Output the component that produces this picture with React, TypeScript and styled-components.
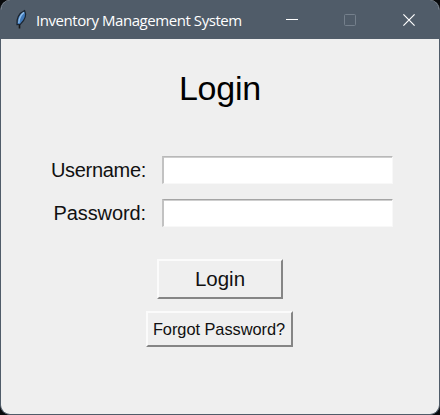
import React from "react";
import styled, { createGlobalStyle } from "styled-components";

const Global = createGlobalStyle`
  * { box-sizing: border-box; }
  html, body { margin: 0; background: #080a0c; overflow: hidden; }
`;

const Window = styled.div`
  width: 440px;
  height: 415px;
  display: flex;
  flex-direction: column;
  background: #efefef;
  border: 1px solid #505c69;
  border-top: 0;
  border-radius: 10px;
  overflow: hidden;
  font-family: "Liberation Sans", Arial, sans-serif;
  color: #111;
`;

const TitleBar = styled.header`
  height: 39px;
  flex: none;
  display: flex;
  align-items: center;
  background: #505c69;
  padding-left: 12px;
`;

const Caption = styled.span`
  flex: 1;
  margin-left: 5px;
  color: #fff;
  font: 15px/20px "Open Sans", sans-serif;
  letter-spacing: -0.44px;
  white-space: nowrap;
`;

const Controls = styled.div`
  display: flex;
  margin-right: 1px;
`;

const Control = styled.button<{ $w: number }>`
  width: ${(p) => p.$w}px;
  height: 39px;
  display: flex;
  align-items: center;
  justify-content: center;
  padding: 0;
  border: 0;
  background: transparent;
`;

const Content = styled.main`
  display: flex;
  flex-direction: column;
  align-items: center;
`;

const Heading = styled.h1`
  margin: 29px 0 0;
  font-size: 34px;
  line-height: 40px;
  font-weight: 400;
  letter-spacing: -0.2px;
  color: #000;
`;

const Form = styled.div`
  display: grid;
  grid-template-columns: 145px 231px;
  column-gap: 16px;
  row-gap: 15px;
  align-self: flex-start;
  margin-top: 48px;
`;

const Label = styled.label<{ $tracking: number }>`
  text-align: right;
  font-size: 20px;
  line-height: 29px;
  height: 28px;
  letter-spacing: ${(p) => p.$tracking}px;
  white-space: nowrap;
`;

const Field = styled.input<{ $edge: string }>`
  width: 231px;
  height: 28px;
  padding: 0 4px;
  background: #fff;
  border: 1px solid #f8f8f8;
  border-top-color: ${(p) => p.$edge};
  border-left: 2px solid #c2c2c2;
  box-shadow: inset 0 1px #cecece;
  outline: 0;
`;

const PushButton = styled.button<{ $w: number; $h: number; $size: number; $gap: number }>`
  width: ${(p) => p.$w}px;
  height: ${(p) => p.$h}px;
  margin-top: ${(p) => p.$gap}px;
  padding: 0;
  background: #efefef;
  border: 2px solid;
  border-color: #fbfbfb #858585 #858585 #fbfbfb;
  font-family: inherit;
  font-size: ${(p) => p.$size}px;
  color: #111;
  white-space: nowrap;
`;

const ForgotButton = styled(PushButton)`
  margin-right: 2px;
  letter-spacing: -0.05px;
`;

const Feather = () => (
  <svg width="18" height="22" viewBox="0 0 18 22">
    <path d="M6.500 19.500V14" stroke="#151515" strokeWidth="1.6" />
    <path d="M4 15.600C3.600 10.800 5.400 4.600 11.600 1.600c2.200 4.400.2 9.600-4.300 13.800z" fill="#3f78b8" stroke="#1b2530" strokeWidth="1.2" />
    <path d="M5.800 14C6 9.500 7.800 5.800 10.900 3.400" stroke="#8fbdea" strokeWidth="1.4" fill="none" />
  </svg>
);

export default function App() {
  return (
    <>
      <Global />
      <Window>
        <TitleBar>
          <Feather />
          <Caption>Inventory Management System</Caption>
          <Controls>
            <Control $w={56} aria-label="Minimize">
              <svg width="12" height="12">
                <path d="M0 5.500H12" stroke="#fff" />
              </svg>
            </Control>
            <Control $w={60} aria-label="Maximize" disabled>
              <svg width="12" height="12">
                <rect x=".5" y=".5" width="11" height="11" rx="1" fill="none" stroke="#75808c" />
              </svg>
            </Control>
            <Control $w={58} aria-label="Close">
              <svg width="12" height="12">
                <path d="M.4.4l11.200 11.200M11.600.4L.4 11.600" stroke="#fff" strokeWidth="1.2" />
              </svg>
            </Control>
          </Controls>
        </TitleBar>
        <Content>
          <Heading>Login</Heading>
          <Form>
            <Label $tracking={-0.3} htmlFor="username">Username:</Label>
            <Field $edge="#b8b8b8" id="username" />
            <Label $tracking={-0.1} htmlFor="password">Password:</Label>
            <Field $edge="#a4a4a4" id="password" type="password" />
          </Form>
          <PushButton $w={126} $h={40} $size={20.5} $gap={32}>Login</PushButton>
          <ForgotButton $w={147} $h={36} $size={16.4} $gap={12}>Forgot Password?</ForgotButton>
        </Content>
      </Window>
    </>
  );
}
